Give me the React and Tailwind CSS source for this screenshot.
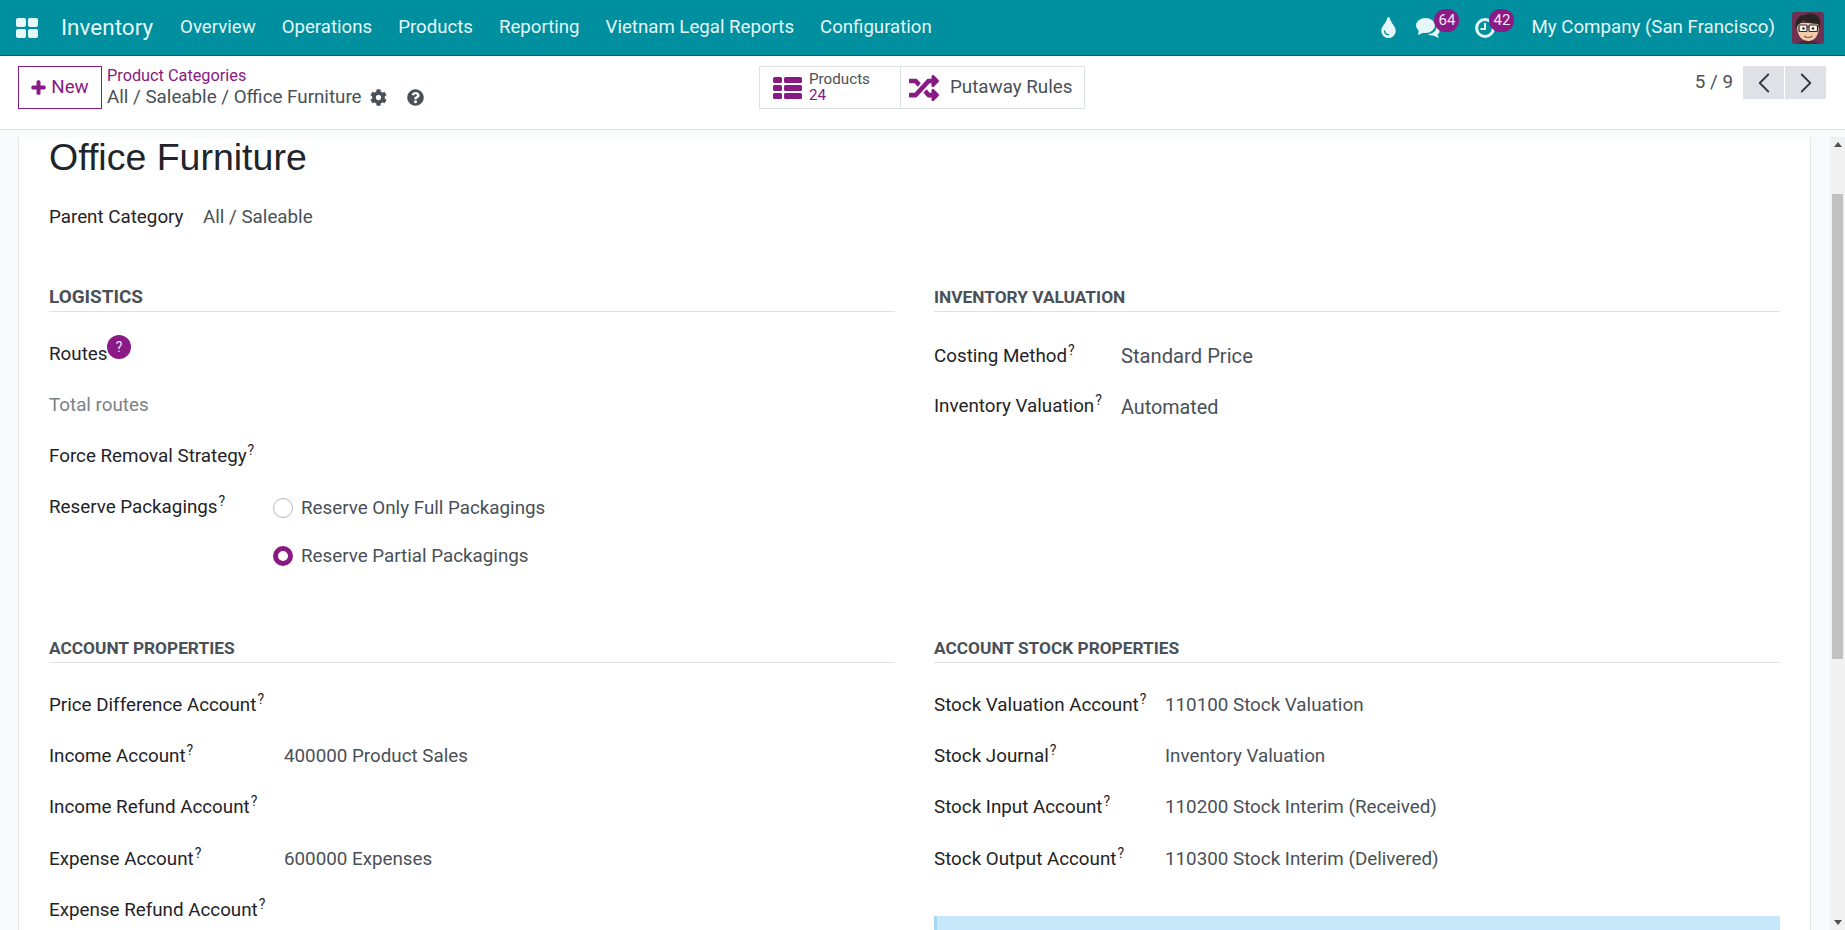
import React from "react";
import { FaTint, FaPlus, FaCog, FaQuestionCircle, FaRandom } from "react-icons/fa";
import { LuChevronLeft, LuChevronRight } from "react-icons/lu";

const roboto = { fontFamily: "Roboto, sans-serif" };

function Avatar() {
  return (
    <svg width="32" height="32" viewBox="0 0 32 32" className="rounded-[3px] shrink-0">
      <rect width="32" height="32" fill="#6e3152" />
      <path d="M6 32 C8 27 24 27 26 32Z" fill="#4b2a3f" />
      <path d="M5 14 C5 25 11 29 16.5 29 C22 29 27 24 27 14 L27 11 L6 11Z" fill="#f2cbaa" />
      <path d="M4 17 C2 9 6 3 13 3 C18 0 27 2 28 8 C29 11 28 14 27 17 L26 12 C21 12 15 11 11 8 C10 11 7 12 6 13Z" fill="#2a2423" />
      <rect x="7" y="13" width="8" height="6.5" rx="1" fill="#f7f2ee" stroke="#2f2a2a" strokeWidth="1.2" />
      <rect x="17" y="13" width="8.5" height="6.5" rx="1" fill="#f7f2ee" stroke="#2f2a2a" strokeWidth="1.2" />
      <path d="M15 15 L17 15" stroke="#2f2a2a" strokeWidth="1" />
      <circle cx="11.5" cy="16.5" r="1.2" fill="#2f2a2a" />
      <circle cx="21" cy="16.5" r="1.2" fill="#2f2a2a" />
      <path d="M12 24 C14 26 18.5 26 20.5 24" fill="none" stroke="#9a5640" strokeWidth="1.2" />
    </svg>
  );
}

function GridIcon() {
  return (
    <svg width="22" height="22" viewBox="0 0 22 22" fill="#e5f7f8">
      <rect x="0" y="1" width="10" height="9" rx="2" />
      <rect x="12" y="1" width="10" height="9" rx="2" />
      <rect x="0" y="12" width="10" height="9" rx="2" />
      <rect x="12" y="12" width="10" height="9" rx="2" />
    </svg>
  );
}

function ListIcon() {
  return (
    <svg width="29" height="22" viewBox="0 0 29 22" fill="#871a83" className="shrink-0">
      <rect x="0" y="0" width="9" height="6" rx="1.5" />
      <rect x="11" y="0" width="18" height="6" rx="1.5" />
      <rect x="0" y="8" width="9" height="6" rx="1.5" />
      <rect x="11" y="8" width="18" height="6" rx="1.5" />
      <rect x="0" y="16" width="9" height="6" rx="1.5" />
      <rect x="11" y="16" width="18" height="6" rx="1.5" />
    </svg>
  );
}

function Comments() {
  return (
    <svg width="24" height="20" viewBox="0 0 24 20" fill="#e5f7f8">
      <ellipse cx="9.5" cy="7.5" rx="9.5" ry="7.5" />
      <path d="M3 11 L2 17 L9 14Z" />
      <path d="M12 16 C17 16 20 13 20.5 9 C22.5 10 24 12 23.5 14 C23 15.5 22 16 21.5 16.5 L23 20 L17 17.5 C15 17.5 13 17 12 16Z" />
    </svg>
  );
}

function ClockRing() {
  return (
    <svg width="20" height="20" viewBox="0 0 20 20" fill="none" stroke="#e5f7f8">
      <circle cx="10" cy="10" r="8.4" strokeWidth="3" />
      <path d="M10 5 V11 H5.5" strokeWidth="2" />
    </svg>
  );
}

function Badge({ children, className }) {
  return (
    <span className={"absolute flex h-[23px] w-[25px] items-center justify-center rounded-full bg-[#8a1a85] text-[15px] leading-none text-[#f3e6f3] " + className}>
      {children}
    </span>
  );
}

function Label({ children, help = true, className = "" }) {
  return (
    <span className={"text-[18.8px] text-[#1f2327] whitespace-nowrap " + className}>
      {children}
      {help && <sup className="ml-[1px] text-[14px] font-normal text-[#1f2327]">?</sup>}
    </span>
  );
}

function Row({ label, value, labelWidth, help = true, height = "h-[51.4px]" }) {
  return (
    <div className={"flex items-center " + height}>
      <div className={labelWidth}>
        <Label help={help}>{label}</Label>
      </div>
      {value && <span className="text-[18.8px] text-[#495057] whitespace-nowrap">{value}</span>}
    </div>
  );
}

function Section({ children, size = "text-[17.3px]" }) {
  return (
    <div className={"flex h-[26px] items-start border-b border-[#dee2e6] font-bold uppercase leading-[22px] text-[#495057] whitespace-nowrap " + size}>
      {children}
    </div>
  );
}

function Radio({ checked, children }) {
  return (
    <div className="flex h-[48px] items-center gap-[8px]">
      {checked ? (
        <span className="h-[20px] w-[20px] rounded-full border-[5.5px] border-[#871a83] bg-white" />
      ) : (
        <span className="h-[20px] w-[20px] rounded-full border border-[#b5b9bd] bg-white" />
      )}
      <span className="text-[18.8px] text-[#495057] whitespace-nowrap">{children}</span>
    </div>
  );
}

export default function App() {
  const menu = ["Overview", "Operations", "Products", "Reporting", "Vietnam Legal Reports", "Configuration"];
  return (
    <div className="flex h-[930px] w-[1845px] flex-col overflow-hidden bg-white" style={roboto}>
      <header className="flex h-[56px] shrink-0 items-center border-b border-[#00616c] bg-[#008f9e] text-[#e5f7f8]">
        <div className="ml-[16px] flex w-[45px] items-center"><GridIcon /></div>
        <span className="text-[22.5px]">Inventory</span>
        <nav className="ml-[27px] flex gap-[26px] text-[18.65px]">
          {menu.map((m) => <span key={m} className="whitespace-nowrap">{m}</span>)}
        </nav>
        <div className="ml-auto flex items-center">
          <FaTint className="mr-[20px] h-[21px] w-[15px]" />
          <div className="relative mr-[35px] flex items-center">
            <Comments />
            <Badge className="left-[18px] -top-[9px]">64</Badge>
          </div>
          <div className="relative mr-[36px] flex items-center">
            <ClockRing />
            <Badge className="left-[14px] -top-[9px]">42</Badge>
          </div>
          <span className="mr-[17px] text-[18.7px] whitespace-nowrap">My Company (San Francisco)</span>
          <div className="mr-[21px]"><Avatar /></div>
        </div>
      </header>

      <div className="flex h-[74px] shrink-0 items-start border-b border-[#dee2e6] bg-white pt-[10px]">
        <div className="flex w-[759px] shrink-0 items-start">
          <button className="ml-[18px] flex h-[43px] w-[84px] items-center justify-center gap-[5px] border border-[#871a83] text-[18.8px] text-[#871a83]">
            <FaPlus className="h-[15px] w-[15px]" stroke="currentColor" strokeWidth={40} />
            New
          </button>
          <div className="ml-[5px] flex flex-col">
            <span className="text-[16.3px] leading-[20px] text-[#871a83]">Product Categories</span>
            <div className="flex h-[22px] items-center text-[18.8px] text-[#495057]">
              <span className="whitespace-nowrap">All / Saleable / Office Furniture</span>
              <FaCog className="ml-[8px] h-[17px] w-[17px]" />
              <FaQuestionCircle className="ml-[20px] h-[17px] w-[17px]" />
            </div>
          </div>
        </div>
        <div className="flex h-[43px] items-stretch border border-[#dee2e6]">
          <div className="flex w-[140px] items-center gap-[7px] pl-[13px]">
            <ListIcon />
            <div className="flex flex-col">
              <span className="text-[15.2px] leading-[16px] text-[#495057]">Products</span>
              <span className="text-[15.2px] leading-[17px] text-[#871a83]">24</span>
            </div>
          </div>
          <div className="flex w-[184px] items-center gap-[11px] border-l border-[#dee2e6] pl-[8px]">
            <FaRandom className="h-[30px] w-[30px] shrink-0 text-[#871a83]" />
            <span className="text-[18.8px] text-[#495057] whitespace-nowrap">Putaway Rules</span>
          </div>
        </div>
        <div className="ml-auto mr-[19px] flex items-center">
          <span className="mr-[10px] text-[18.8px] text-[#495057]">5 / 9</span>
          <button className="flex h-[33px] w-[41px] items-center justify-center bg-[#dee2e6] text-[#343a40]"><LuChevronLeft className="h-[34px] w-[34px]" strokeWidth={1.3} /></button>
          <button className="ml-[1px] flex h-[33px] w-[41px] items-center justify-center bg-[#dee2e6] text-[#343a40]"><LuChevronRight className="h-[34px] w-[34px]" strokeWidth={1.3} /></button>
        </div>
      </div>

      <div className="flex min-h-0 flex-1 bg-[#f9fafb]">
        <div className="min-w-0 flex-1 overflow-hidden pl-[18px] pr-[19px] pt-[7px]">
          <main className="h-[900px] border-x border-[#e5e7eb] bg-white pl-[30px] pr-[29px]">
            <h1 className="text-[37.5px] leading-[40px] text-[#212529]" style={{ fontFamily: '"Liberation Sans", sans-serif' }}>Office Furniture</h1>
            <div className="mt-[17px] flex h-[47px] items-center">
              <span className="w-[154px] text-[18.8px] text-[#1f2327] whitespace-nowrap">Parent Category</span>
              <span className="text-[18.8px] text-[#495057] whitespace-nowrap">All / Saleable</span>
            </div>
            <div className="mt-[45px] grid grid-cols-[846px_846px] gap-x-[39px]">
              <div className="h-[351px]">
                <Section size="text-[18.9px]">Logistics</Section>
                <div className="relative mt-[17px]">
                  <Row label="Routes" labelWidth="w-[280px]" help={false} value={null} height="h-[50.7px]" />
                  <span className="absolute left-[58px] top-[6px] flex h-[24px] w-[24px] items-center justify-center rounded-full bg-[#8a1a85] text-[14px] text-[#f3e6f3]">?</span>
                </div>
                <div className="flex h-[50.7px] items-center text-[18.8px] text-[#7b8187]">Total routes</div>
                <Row label="Force Removal Strategy" labelWidth="w-[222px]" height="h-[50.7px]" />
                <div className="flex">
                  <div className="w-[224px] pt-[12px]"><Label>Reserve Packagings</Label></div>
                  <div className="flex flex-col pt-[3px]">
                    <Radio>Reserve Only Full Packagings</Radio>
                    <Radio checked>Reserve Partial Packagings</Radio>
                  </div>
                </div>
              </div>
              <div>
                <Section>Inventory Valuation</Section>
                <div className="mt-[18px] flex h-[51.2px] items-center">
                  <div className="w-[187px]"><Label>Costing Method</Label></div>
                  <span className="pt-[1px] text-[20.2px] text-[#495057]">Standard Price</span>
                </div>
                <div className="flex h-[50px] items-center">
                  <div className="w-[187px]"><Label>Inventory Valuation</Label></div>
                  <span className="pt-[3px] text-[19.8px] text-[#495057]">Automated</span>
                </div>
              </div>
              <div>
                <Section>Account Properties</Section>
                <div className="mt-[16px]">
                  <Row label="Price Difference Account" labelWidth="w-[235px]" />
                  <Row label="Income Account" labelWidth="w-[235px]" value="400000 Product Sales" />
                  <Row label="Income Refund Account" labelWidth="w-[235px]" />
                  <Row label="Expense Account" labelWidth="w-[235px]" value="600000 Expenses" />
                  <Row label="Expense Refund Account" labelWidth="w-[235px]" />
                </div>
              </div>
              <div>
                <Section>Account Stock Properties</Section>
                <div className="mt-[16px]">
                  <Row label="Stock Valuation Account" labelWidth="w-[231px]" value="110100 Stock Valuation" />
                  <Row label="Stock Journal" labelWidth="w-[231px]" value="Inventory Valuation" />
                  <Row label="Stock Input Account" labelWidth="w-[231px]" value="110200 Stock Interim (Received)" />
                  <Row label="Stock Output Account" labelWidth="w-[231px]" value="110300 Stock Interim (Delivered)" />
                </div>
                <div className="mt-[31px] h-[60px] border-l-[3px] border-[#a9d8f2] bg-[#c6e8fa]" />
              </div>
            </div>
          </main>
        </div>
        <div className="mt-[7px] flex w-[15px] shrink-0 flex-col items-center bg-[#f1f1f1]">
          <span className="mt-[5px] h-0 w-0 border-x-[4px] border-b-[5px] border-x-transparent border-b-[#505050]" />
          <div className="mt-[47px] h-[465px] w-[11px] bg-[#c1c1c1]" />
          <span className="mb-[5px] mt-auto h-0 w-0 border-x-[4px] border-t-[5px] border-x-transparent border-t-[#505050]" />
        </div>
      </div>
    </div>
  );
}
